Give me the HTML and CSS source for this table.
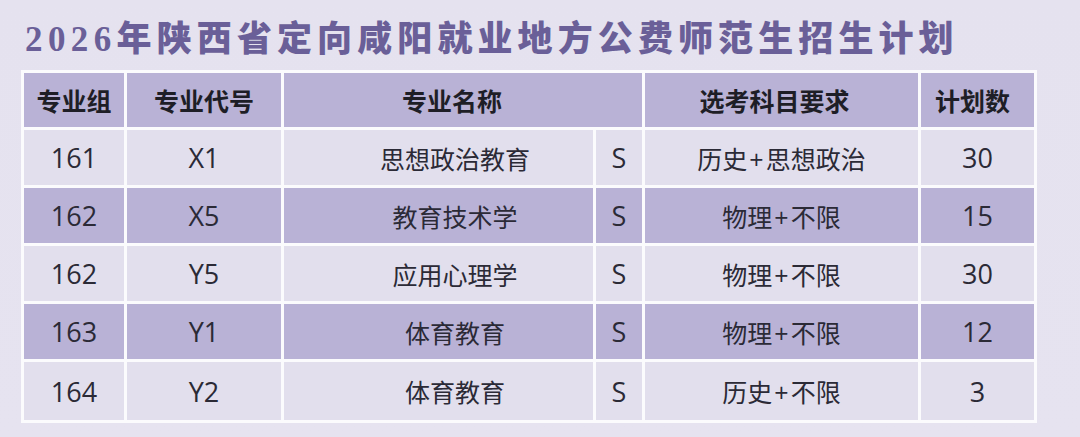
FILE: index.html
```html
<!DOCTYPE html>
<html lang="zh">
<head>
<meta charset="utf-8">
<title>2026年陕西省定向咸阳就业地方公费师范生招生计划</title>
<link rel="stylesheet" href="styles.css">
</head>
<body>
<main class="page">
  <h1 class="title"><span class="yr">2026</span>年陕西省定向咸阳就业地方公费师范生招生计划</h1>
  <table class="plan">
    <colgroup>
      <col class="c1"><col class="c2"><col class="c3"><col class="c4"><col class="c5"><col class="c6">
    </colgroup>
    <thead>
      <tr>
        <th>专业组</th>
        <th>专业代号</th>
        <th colspan="2" class="hname">专业名称</th>
        <th class="hsubj">选考科目要求</th>
        <th class="hnum">计划数</th>
      </tr>
    </thead>
    <tbody>
      <tr class="light"><td>161</td><td>X1</td><td class="name">思想政治教育</td><td>S</td><td class="subj">历史<span class="plus">+</span>思想政治</td><td>30</td></tr>
      <tr class="dark"><td>162</td><td>X5</td><td class="name">教育技术学</td><td>S</td><td class="subj">物理<span class="plus">+</span>不限</td><td>15</td></tr>
      <tr class="light"><td>162</td><td>Y5</td><td class="name">应用心理学</td><td>S</td><td class="subj">物理<span class="plus">+</span>不限</td><td>30</td></tr>
      <tr class="dark"><td>163</td><td>Y1</td><td class="name">体育教育</td><td>S</td><td class="subj">物理<span class="plus">+</span>不限</td><td>12</td></tr>
      <tr class="light last"><td>164</td><td>Y2</td><td class="name">体育教育</td><td>S</td><td class="subj">历史<span class="plus">+</span>不限</td><td>3</td></tr>
    </tbody>
  </table>
</main>
</body>
</html>
```

FILE: styles.css
```css
* { box-sizing: border-box; }
html, body {
  margin: 0;
  padding: 0;
}
body {
  width: 1080px;
  height: 437px;
  overflow: hidden;
  background: linear-gradient(180deg, #e5e2ef 0%, #e6e3f0 100%);
  font-family: "Open Sans", "Noto Sans CJK SC", sans-serif;
}
.page {
  display: flex;
  flex-direction: column;
  padding: 0 0 0 21px;
}
.title {
  margin: 0;
  height: 70px;
  padding: 16px 0 0 4px;
  font-family: "Noto Sans CJK SC", sans-serif;
  font-weight: 900;
  font-size: 35px;
  line-height: 40px;
  letter-spacing: 5.1px;
  color: #6a5f98;
  white-space: nowrap;
}
.title .yr {
  font-family: "Liberation Serif", "Noto Sans CJK SC", serif;
  font-weight: 700;
  letter-spacing: 5.4px;
}
.plan {
  border-collapse: separate;
  border-spacing: 3px;
  background: #fbfbfd;
  table-layout: fixed;
  width: 1016px;
}
.c1 { width: 100px; }
.c2 { width: 154px; }
.c3 { width: 309px; }
.c4 { width: 46px; }
.c5 { width: 273px; }
.c6 { width: 113px; }
.plan th, .plan td {
  padding: 0;
  text-align: center;
  vertical-align: middle;
  white-space: nowrap;
}
.plan th {
  height: 54px;
  background: #b9b2d6;
  font-family: "Noto Sans CJK SC", sans-serif;
  font-weight: 700;
  font-size: 25px;
  color: #1e1e26;
}
.plan th.hname { padding-right: 22px; }
.plan th.hsubj { padding-right: 14px; }
.plan th.hnum { padding-right: 10px; }
.plan td {
  height: 55px;
  font-size: 27px;
  color: #2b2a36;
}
.plan td.name, .plan td.subj { font-size: 25px; }
.plan td.subj .plus { margin: 0 2px; }
.plan tr.last td { height: 58px; }
.plan td.name { padding-left: 33px; }
.plan tr.light td { background: #e2dfed; }
.plan tr.dark td { background: #b9b2d6; }
```
